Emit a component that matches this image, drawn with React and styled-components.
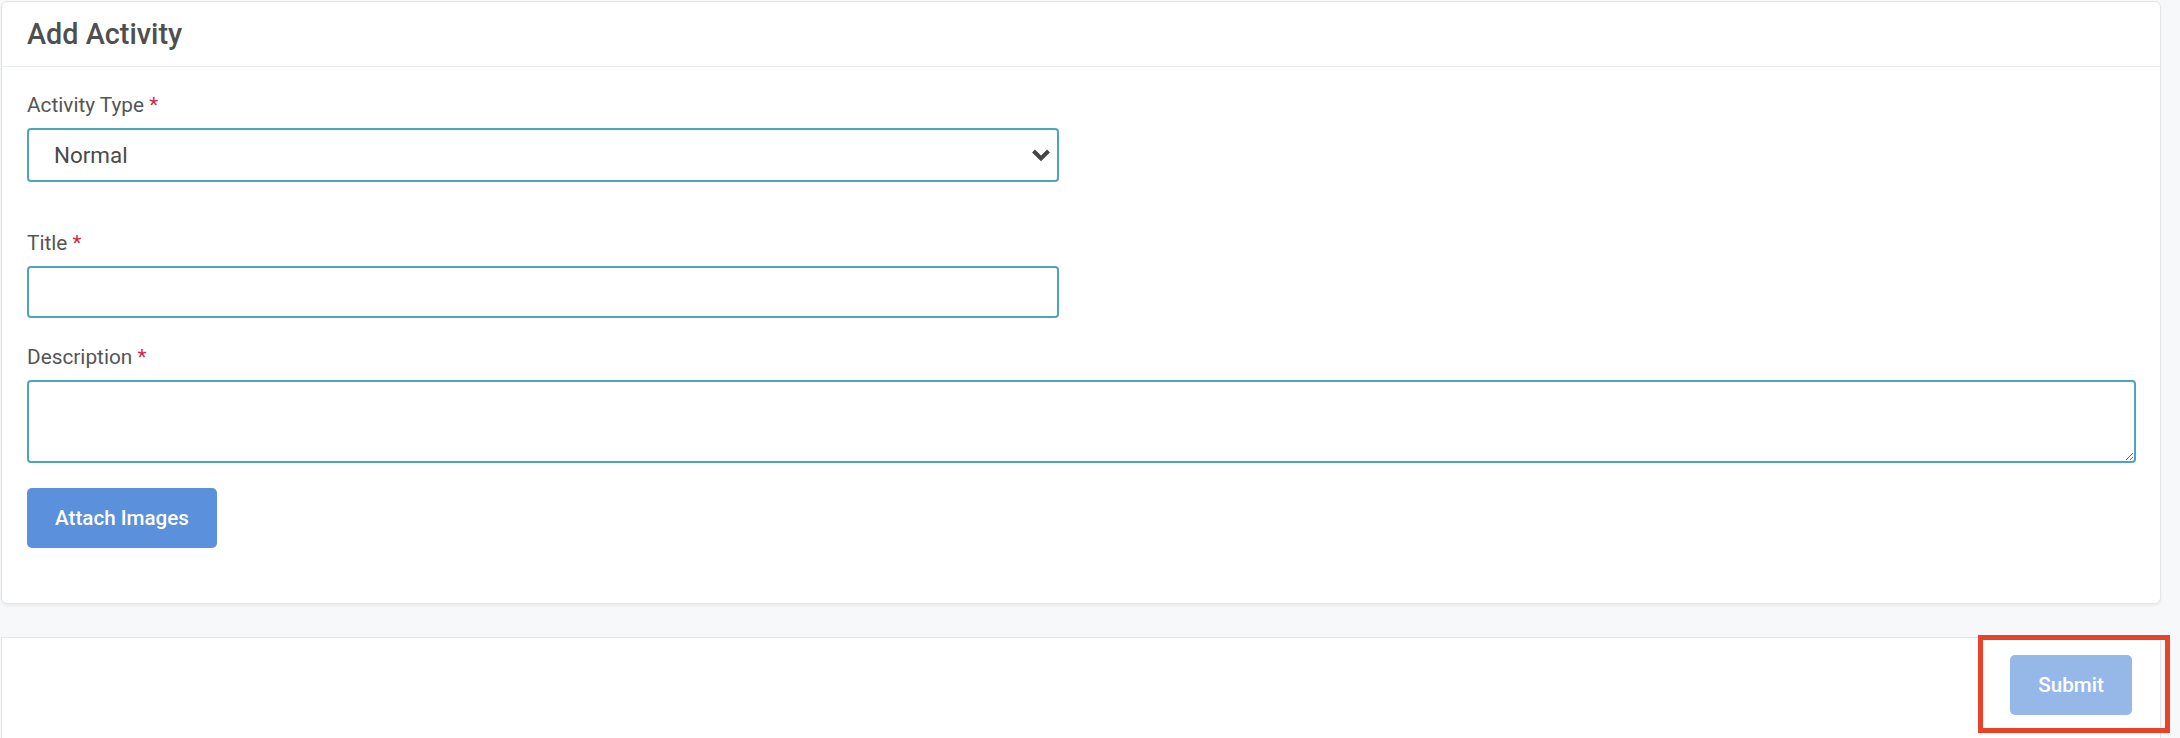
import React from "react";
import styled, { createGlobalStyle } from "styled-components";

const GlobalStyle = createGlobalStyle`
    html, body {
        margin: 0;
        padding: 0;
        background: #F7F8FA;
        font-family: Roboto, "Liberation Sans", Arial, sans-serif;
    }
    * {
        box-sizing: border-box;
    }
`

function App() {
    return (
        <>
            <GlobalStyle />
            <Page>
                <Card>
                    <Header>
                        <H1>Add Activity</H1>
                    </Header>
                    <Body>
                        <Field $gap="46px">
                            <Label>Activity Type <Star>*</Star></Label>
                            <SelectWrap>
                                <Select defaultValue="normal">
                                    <option value="normal">Normal</option>
                                    <option value="urgent">Urgent</option>
                                </Select>
                                <Chevron width="20" height="14" viewBox="0 0 20 14">
                                    <polyline points="2.5,3 10,10.5 17.5,3" fill="none" stroke="#454545" strokeWidth="4" />
                                </Chevron>
                            </SelectWrap>
                        </Field>
                        <Field $gap="24px">
                            <Label>Title <Star>*</Star></Label>
                            <Input type="text" />
                        </Field>
                        <Field $gap="25px">
                            <Label>Description <Star>*</Star></Label>
                            <TextArea />
                        </Field>
                        <Button>Attach Images</Button>
                    </Body>
                </Card>
                <Footer>
                    <Marked>
                        <Button $disabled>Submit</Button>
                        <Highlight />
                    </Marked>
                </Footer>
            </Page>
        </>
    )
}

export default App

const Page = styled.div`
    width: 100%;
    min-height: 738px;
    padding: 1px 19px 0 1px;
    overflow: hidden;
`

const Card = styled.div`
    width: 100%;
    background: #FFFFFF;
    border: 1px solid #E4E5E6;
    border-radius: 6px;
    box-shadow: 0 2px 3px rgba(0, 0, 0, 0.06);
`

const Header = styled.div`
    height: 65px;
    display: flex;
    align-items: center;
    padding: 0 25px 1px 25px;
    border-bottom: 1px solid #E9EDED;
`

const H1 = styled.h1`
    margin: 0;
    font-weight: 500;
    font-size: 28.8px;
    line-height: 34px;
    color: #4F4F4F;
`

const Body = styled.div`
    padding: 23px 24px 55px 25px;
`

const Field = styled.div`
    display: flex;
    flex-direction: column;
    margin-bottom: ${(p) => p.$gap};
`

const Label = styled.label`
    font-weight: 400;
    font-size: 20.8px;
    line-height: 30px;
    color: #555555;
    margin-bottom: 8px;
`

const Star = styled.span`
    color: #C9274F;
`

const SelectWrap = styled.div`
    position: relative;
    width: 1032px;
`

const Select = styled.select`
    width: 100%;
    height: 54px;
    appearance: none;
    border: 2px solid #4CA5BE;
    border-radius: 4px;
    background: #FFFFFF;
    padding: 0 50px 0 25px;
    font-family: Roboto, "Liberation Sans", Arial, sans-serif;
    font-size: 22.4px;
    color: #4A4A4A;
    outline: none;
`

const Chevron = styled.svg`
    position: absolute;
    right: 8px;
    top: 20px;
    pointer-events: none;
`

const Input = styled.input`
    width: 1032px;
    height: 52px;
    border: 2px solid #4CA5BE;
    border-radius: 4px;
    padding: 0 20px;
    font-family: Roboto, "Liberation Sans", Arial, sans-serif;
    font-size: 20px;
    color: #4A4A4A;
    outline: none;
`

const TextArea = styled.textarea`
    width: 100%;
    height: 83px;
    border: 2px solid #4CA5BE;
    border-radius: 4px;
    padding: 12px 20px;
    font-family: Roboto, "Liberation Sans", Arial, sans-serif;
    font-size: 20px;
    color: #4A4A4A;
    outline: none;
    resize: vertical;
`

const Button = styled.button`
    display: inline-flex;
    align-items: center;
    justify-content: center;
    height: 60px;
    width: ${(p) => p.$width || "190px"};
    padding: 0;
    border: none;
    border-radius: 5px;
    background: ${(p) => (p.$disabled ? "#96B8E8" : "#5B90DC")};
    font-family: Roboto, "Liberation Sans", Arial, sans-serif;
    font-weight: 500;
    font-size: 20.6px;
    color: #FFFFFF;
    cursor: pointer;
`

const Footer = styled.div`
    margin-top: 33px;
    min-height: 120px;
    background: #FFFFFF;
    border: 1px solid #E3E5E8;
    border-bottom: none;
    display: flex;
    justify-content: flex-end;
    align-items: flex-start;
    padding: 17px 28px 0 0;
`

const Marked = styled.div`
    position: relative;
    display: flex;

    & > button {
        width: 122px;
    }
`

const Highlight = styled.div`
    position: absolute;
    top: -20px;
    left: -32px;
    right: -38px;
    bottom: -18px;
    border: 5px solid #EA4229;
    pointer-events: none;
`
